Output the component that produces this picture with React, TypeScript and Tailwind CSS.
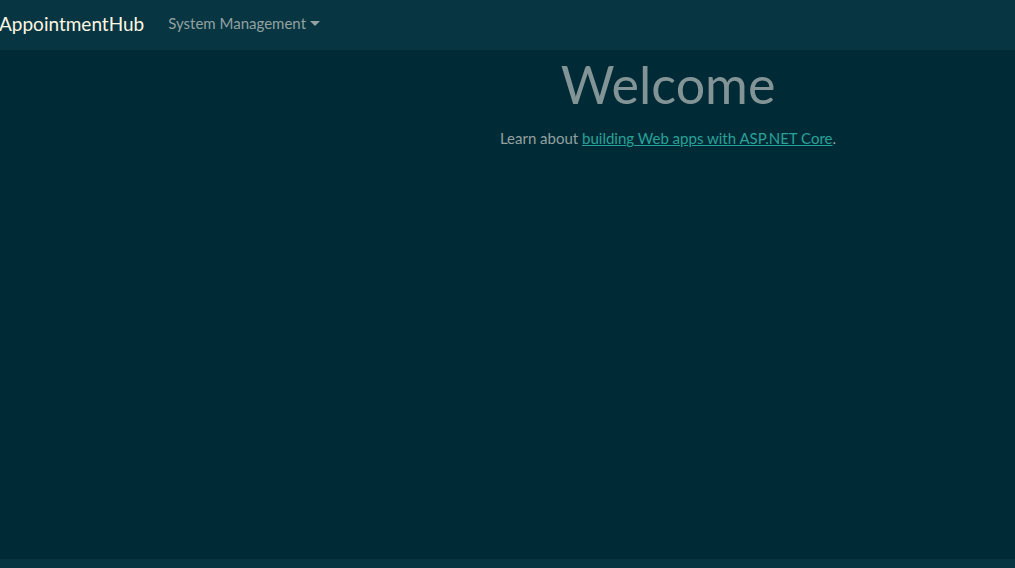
import React from "react";

export default function App() {
  return (
    <div
      className="min-h-[568px] h-[568px] w-[1015px] overflow-hidden bg-[#002b36] flex flex-col"
      style={{ fontFamily: "Lato, 'Noto Sans', sans-serif" }}
    >
      <nav className="h-[50px] bg-[#073642] flex items-center shrink-0 pb-[4px]">
        <span className="ml-[-1px] text-[19px] text-[#fdf6e3] leading-none">AppointmentHub</span>
        <div className="ml-[24px] flex items-center text-[15px] text-[#93a1a1]">
          <span>System Management</span>
          <span className="ml-[4px] w-0 h-0 border-l-[5px] border-r-[5px] border-t-[5px] border-l-transparent border-r-transparent border-t-[#93a1a1]" />
        </div>
      </nav>
      <main className="flex-1 pl-[321px]">
        <div className="text-center">
          <h1 className="mt-[3px] text-[52px] font-normal leading-[1.2] text-[#839496]">Welcome</h1>
          <p className="mt-[12px] text-[15px] text-[#93a1a1]">
            Learn about{" "}
            <a href="#" className="text-[#2aa198] underline">
              building Web apps with ASP.NET Core
            </a>
            .
          </p>
        </div>
      </main>
      <footer className="h-[9px] bg-[#073642] shrink-0" />
    </div>
  );
}
